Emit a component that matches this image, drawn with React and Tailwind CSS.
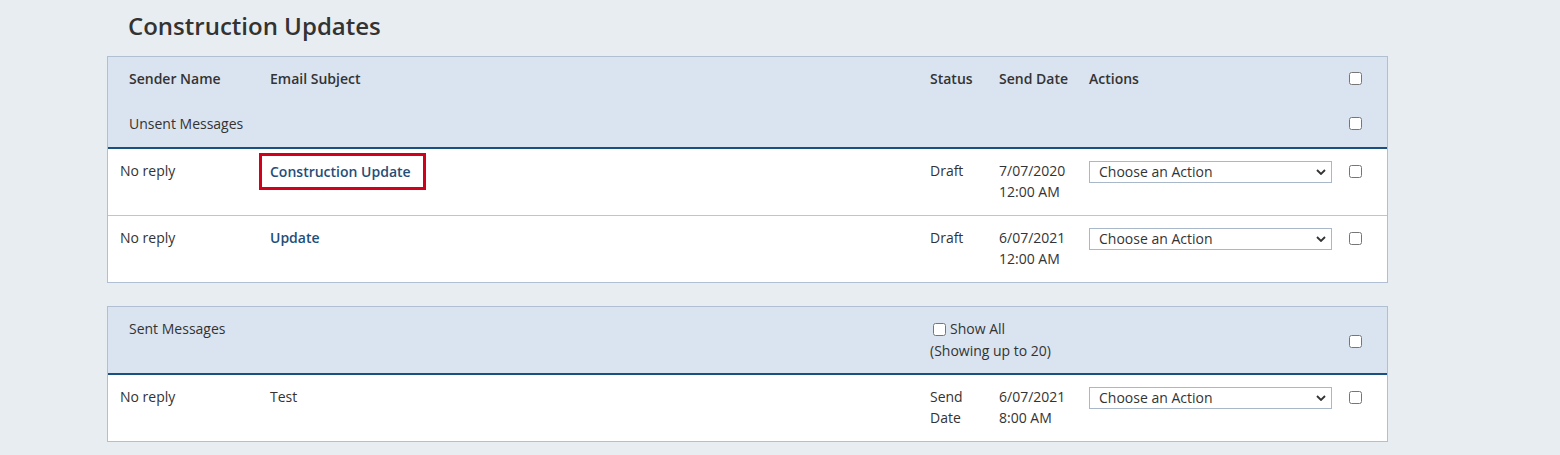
import React from "react";

const grid = "grid grid-cols-[150px_660px_69px_90px_261px_1fr]";

function Check({ className = "" }) {
  return (
    <input
      type="checkbox"
      className={`m-0 h-[13px] w-[13px] accent-[#1a5080] ${className}`}
    />
  );
}

function ActionSelect() {
  return (
    <div className="relative w-[243px]">
      <select className="h-[22px] w-full appearance-none border border-[#a9b8c8] bg-white pl-[9px] pr-6 text-[14px] leading-[20px] text-[#333]">
        <option>Choose an Action</option>
      </select>
      <svg
        viewBox="0 0 10 6"
        className="pointer-events-none absolute right-[6px] top-[8px] h-[6px] w-[10px]"
      >
        <path d="M1 1l4 4 4-4" fill="none" stroke="#333" strokeWidth="1.8" />
      </svg>
    </div>
  );
}

function Row({ sender, subject, link, boxed, status, date, time, last }) {
  return (
    <div className={`${grid} bg-white ${last ? "h-[66px]" : "h-[67px] border-b border-[#b9c6d3]"}`}>
      <div className="pl-3 pt-[11px]">{sender}</div>
      <div className="pl-3 pt-[11px]">
        {link ? (
          <span
            className={`font-semibold text-[#1f4e79] ${
              boxed ? "-ml-[11px] -mt-[7px] inline-block border-[3px] border-[#d0021b] pl-2 pr-[12px] py-[5px]" : ""
            }`}
          >
            {subject}
          </span>
        ) : (
          subject
        )}
      </div>
      <div className="pl-3 pt-[11px] leading-[21px]">{status}</div>
      <div className="pl-3 pt-[11px] leading-[21px]">
        <div>{date}</div>
        <div>{time}</div>
      </div>
      <div className="pl-3 pt-[12px]">
        <ActionSelect />
      </div>
      <div className="pl-[11px] pt-[13px]">
        <Check />
      </div>
    </div>
  );
}

export default function App() {
  return (
    <div className="min-h-[455px] bg-[#e8edf2] pl-[107px] pt-[10px] font-['Open_Sans',sans-serif] text-[14px] text-[#333]">
      <h1 className="pl-[21px] text-[24px] font-semibold leading-[32px] text-[#333]">
        Construction Updates
      </h1>

      <div className="mt-[14px] w-[1281px] border border-[#b0c0d2]">
        <div className="border-b-2 border-[#1a5080] bg-[#dae4f0]">
          <div className={`${grid} h-[43px] items-center font-semibold`}>
            <div className="pl-[21px]">Sender Name</div>
            <div className="pl-3">Email Subject</div>
            <div className="pl-3">Status</div>
            <div className="pl-3">Send Date</div>
            <div className="pl-3">Actions</div>
            <div className="pl-[11px] pt-[2px]">
              <Check />
            </div>
          </div>
          <div className={`${grid} h-[47px] items-center`}>
            <div className="col-span-5 pl-[21px]">Unsent Messages</div>
            <div className="pl-[11px] pt-[2px]">
              <Check />
            </div>
          </div>
        </div>
        <Row
          sender="No reply"
          subject="Construction Update"
          link
          boxed
          status="Draft"
          date="7/07/2020"
          time="12:00 AM"
        />
        <Row
          sender="No reply"
          subject="Update"
          link
          status="Draft"
          date="6/07/2021"
          time="12:00 AM"
          last
        />
      </div>

      <div className="mt-[23px] w-[1281px] border border-[#b0c0d2]">
        <div className={`${grid} h-[68px] border-b-2 border-[#1a5080] bg-[#dae4f0]`}>
          <div className="col-span-2 pl-[21px] pt-[11px]">Sent Messages</div>
          <div className="col-span-3 pl-3 pt-[11px] leading-[22px]">
            <label className="flex items-center gap-[4px] pl-[3px]">
              <Check />
              <span>Show All</span>
            </label>
            <div>(Showing up to 20)</div>
          </div>
          <div className="flex items-center pl-[11px] pt-[2px]">
            <Check />
          </div>
        </div>
        <Row
          sender="No reply"
          subject="Test"
          status={
            <>
              <div>Send</div>
              <div>Date</div>
            </>
          }
          date="6/07/2021"
          time="8:00 AM"
          last
        />
      </div>
    </div>
  );
}
